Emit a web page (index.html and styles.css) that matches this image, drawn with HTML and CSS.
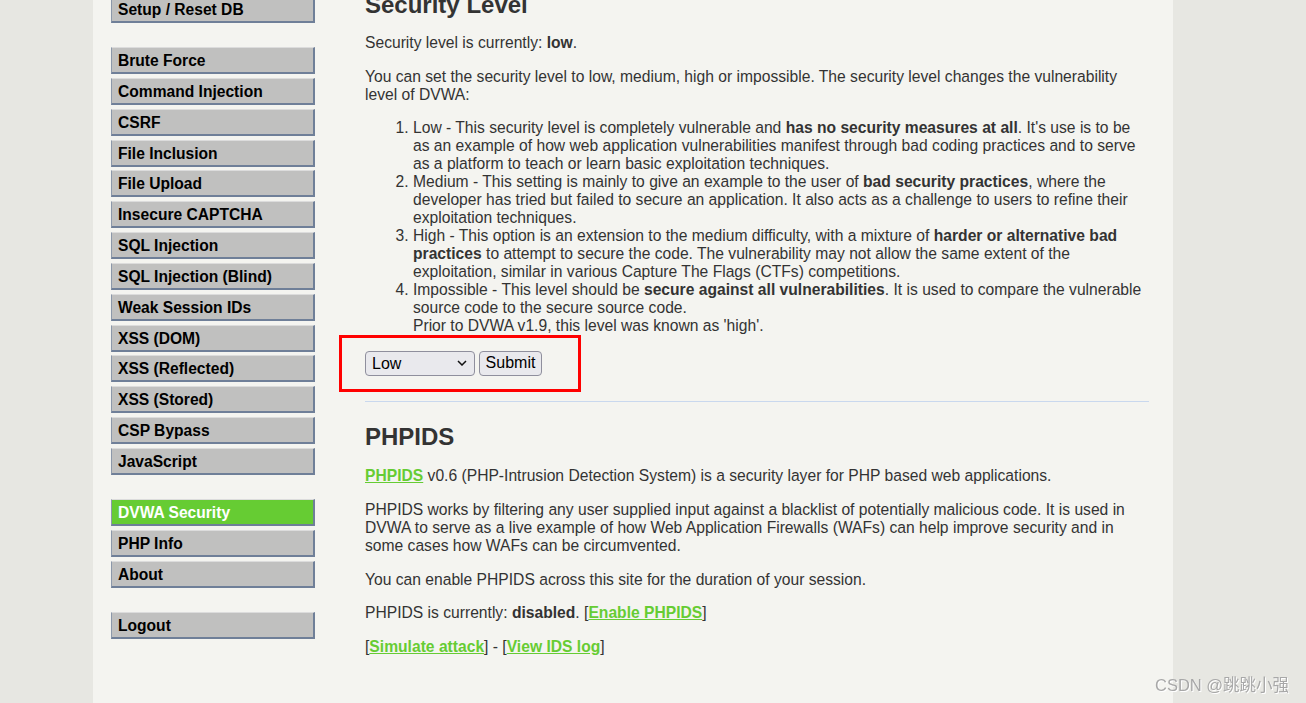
FILE: index.html
```html
<!DOCTYPE html>
<html lang="en">
<head>
<meta charset="utf-8">
<title>DVWA Security</title>
<link rel="stylesheet" href="styles.css">
</head>
<body>
<div class="page">
  <div class="sidebar">
    <ul class="menu">
      <li><a href="#">Setup / Reset DB</a></li>
    </ul>
    <ul class="menu">
      <li><a href="#">Brute Force</a></li>
      <li><a href="#">Command Injection</a></li>
      <li><a href="#">CSRF</a></li>
      <li><a href="#">File Inclusion</a></li>
      <li><a href="#">File Upload</a></li>
      <li><a href="#">Insecure CAPTCHA</a></li>
      <li><a href="#">SQL Injection</a></li>
      <li><a href="#">SQL Injection (Blind)</a></li>
      <li><a href="#">Weak Session IDs</a></li>
      <li><a href="#">XSS (DOM)</a></li>
      <li><a href="#">XSS (Reflected)</a></li>
      <li><a href="#">XSS (Stored)</a></li>
      <li><a href="#">CSP Bypass</a></li>
      <li><a href="#">JavaScript</a></li>
    </ul>
    <ul class="menu">
      <li class="selected"><a href="#">DVWA Security</a></li>
      <li><a href="#">PHP Info</a></li>
      <li><a href="#">About</a></li>
    </ul>
    <ul class="menu">
      <li><a href="#">Logout</a></li>
    </ul>
  </div>
  <div class="main">
    <h1>Security Level</h1>
    <p>Security level is currently: <b>low</b>.</p>
    <p>You can set the security level to low, medium, high or impossible. The security level changes the vulnerability level of DVWA:</p>
    <ol class="levels">
      <li>Low - This security level is completely vulnerable and <b>has no security measures at all</b>. It's use is to be as an example of how web application vulnerabilities manifest through bad coding practices and to serve as a platform to teach or learn basic exploitation techniques.</li>
      <li>Medium - This setting is mainly to give an example to the user of <b>bad security practices</b>, where the developer has tried but failed to secure an application. It also acts as a challenge to users to refine their exploitation techniques.</li>
      <li>High - This option is an extension to the medium difficulty, with a mixture of <b>harder or alternative bad practices</b> to attempt to secure the code. The vulnerability may not allow the same extent of the exploitation, similar in various Capture The Flags (CTFs) competitions.</li>
      <li>Impossible - This level should be <b>secure against all vulnerabilities</b>. It is used to compare the vulnerable source code to the secure source code.<br>Prior to DVWA v1.9, this level was known as 'high'.</li>
    </ol>
    <form class="level-form">
      <select class="level-select">
        <option>Low</option>
        <option>Medium</option>
        <option>High</option>
        <option>Impossible</option>
      </select>
      <button type="button" class="submit-btn">Submit</button>
      <div class="annotation"></div>
    </form>
    <hr class="divider">
    <h2>PHPIDS</h2>
    <p class="intro"><a class="link" href="#">PHPIDS</a> v0.6 (PHP-Intrusion Detection System) is a security layer for PHP based web applications.</p>
    <p>PHPIDS works by filtering any user supplied input against a blacklist of potentially malicious code. It is used in DVWA to serve as a live example of how Web Application Firewalls (WAFs) can help improve security and in some cases how WAFs can be circumvented.</p>
    <p>You can enable PHPIDS across this site for the duration of your session.</p>
    <p>PHPIDS is currently: <b>disabled</b>. [<a class="link" href="#">Enable PHPIDS</a>]</p>
    <p>[<a class="link" href="#">Simulate attack</a>] - [<a class="link" href="#">View IDS log</a>]</p>
  </div>
</div>
<div class="watermark">CSDN @跳跳小强</div>
</body>
</html>
```

FILE: styles.css
```css
html, body {
  margin: 0;
  padding: 0;
  height: 100%;
  overflow: hidden;
}
body {
  background: #e7e7e2;
  font-family: "Liberation Sans", Arial, sans-serif;
  font-size: 15.65px;
  color: #333;
}
.page {
  margin-left: 93px;
  width: 1080px;
  margin-top: -10px;
  min-height: 760px;
  background: #f4f4f0;
  display: flex;
  gap: 50px;
  padding: 0 24px 0 18px;
  box-sizing: border-box;
}
.sidebar {
  width: 204px;
  flex: none;
  padding-top: 6px;
}
.menu {
  list-style: none;
  margin: 0 0 24px;
  padding: 0;
}
.menu li {
  margin-bottom: 3.85px;
}
.menu a {
  display: block;
  height: 21px;
  line-height: 19px;
  padding: 3px 6px 0;
  background: #c0c0bf;
  border-top: 1px solid #dcdcdc;
  border-left: 1px solid #8c98aa;
  border-right: 2px solid #6f7f98;
  border-bottom: 2px solid #6f7f98;
  color: #000;
  font-size: 15.6px;
  font-weight: bold;
  text-decoration: none;
  white-space: nowrap;
}
.menu li.selected a {
  background: #66cc33;
  color: #fff;
}
.main {
  flex: 1;
  min-width: 0;
}
h1, h2 {
  font-size: 24px;
  line-height: 28px;
  font-weight: bold;
  color: #333;
  margin: 0;
}
h1 {
  margin-top: 1px;
  margin-bottom: 15px;
}
h2 {
  margin-top: 21px;
  margin-bottom: 16px;
}
p {
  margin: 0 0 15.5px;
  line-height: 18px;
}
p.intro {
  margin-bottom: 16.5px;
}
.levels {
  margin: -0.5px 0 16px;
  padding-left: 48px;
  line-height: 18px;
}
.level-form {
  position: relative;
  display: flex;
  gap: 4px;
  height: 25px;
  align-items: stretch;
}
.level-select {
  -webkit-appearance: none;
  appearance: none;
  width: 110px;
  height: 25px;
  font-family: "Liberation Sans", Arial, sans-serif;
  font-size: 16px;
  color: #000;
  background-color: #e9e9ed;
  background-image: url("data:image/svg+xml,%3Csvg xmlns='http://www.w3.org/2000/svg' width='10' height='6' viewBox='0 0 10 6'%3E%3Cpath d='M1 1l4 4 4-4' fill='none' stroke='%23111' stroke-width='1.5'/%3E%3C/svg%3E");
  background-repeat: no-repeat;
  background-position: right 7px center;
  border: 1px solid #8f8f9d;
  border-radius: 4px;
  padding: 0 6px;
  margin: 0;
}
.submit-btn {
  width: 63px;
  height: 25px;
  font-family: "Liberation Sans", Arial, sans-serif;
  font-size: 16px;
  color: #000;
  background: #e9e9ed;
  border: 1px solid #8f8f9d;
  border-radius: 4px;
  padding: 0 4px;
  margin: 0;
}
.annotation {
  position: absolute;
  left: -26px;
  top: -16px;
  width: 236px;
  height: 51px;
  border: 3px solid #f00;
  pointer-events: none;
}
.divider {
  margin: 25px 0 0;
  border: 0;
  height: 1px;
  background: #c9d8ee;
}
.link {
  color: #66cc33;
  font-weight: bold;
  text-decoration: underline;
}
.watermark {
  position: fixed;
  left: 1155px;
  top: 672px;
  font-family: "Liberation Sans", "Noto Sans CJK SC", sans-serif;
  font-size: 16.5px;
  color: #a8a8a8;
  text-shadow: 1px 1px 0 #fff;
  white-space: nowrap;
}
```
